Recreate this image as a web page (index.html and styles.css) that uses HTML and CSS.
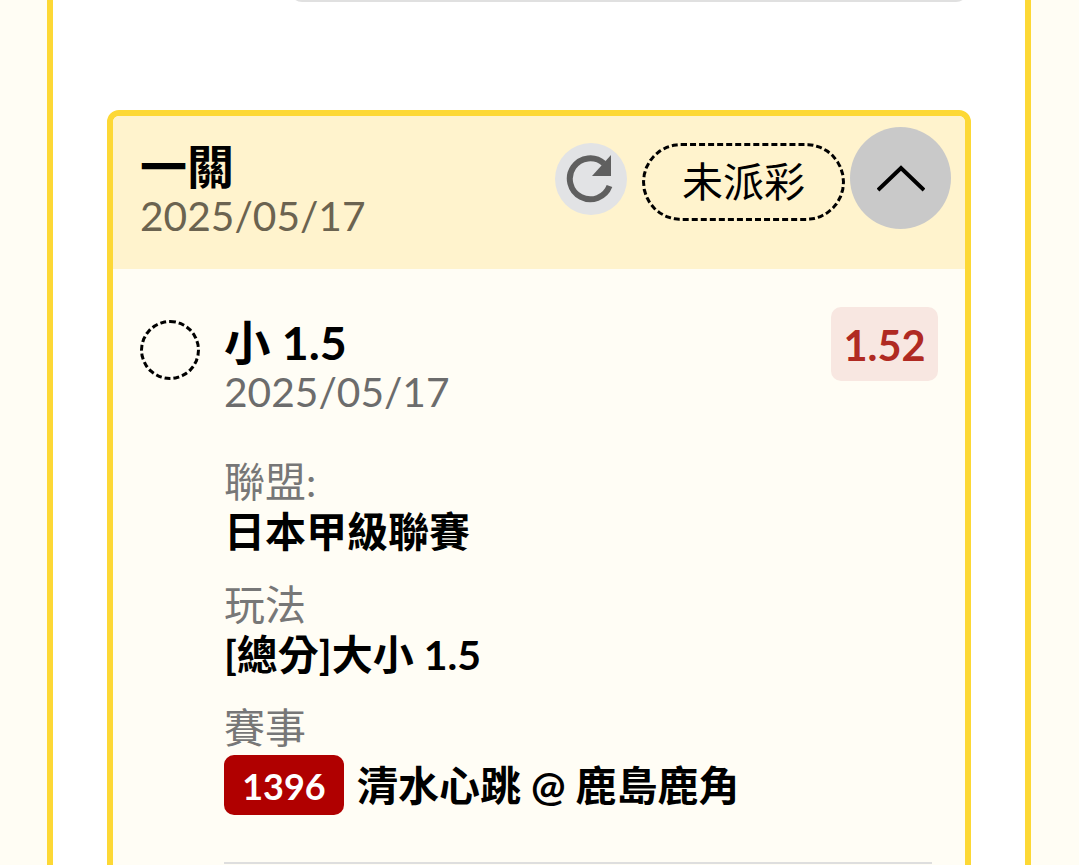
FILE: index.html
```html
<!DOCTYPE html>
<html lang="zh-Hant">
<head>
    <meta charset="UTF-8">
    <meta name="viewport" content="width=device-width, initial-scale=1.0">
    <title>一關</title>
    <link rel="stylesheet" href="styles.css">
</head>
<body>

<div class="panel">
    <div class="top-field"></div>

    <div class="bet-card">
        <!-- header -->
        <div class="bet-head">
            <div class="bet-head-text">
                <div class="bet-type">一關</div>
                <div class="bet-date">2025/05/17</div>
            </div>
            <div class="bet-head-actions">
                <div class="refresh-btn">
                    <svg width="50" height="50" viewBox="0 0 50 50">
                        <path class="refresh-arc" d="M43.5 32A20.5 20.5 0 1 1 38 9.5"/>
                        <path class="refresh-tip" d="M45 1V22H26Z"/>
                    </svg>
                </div>
                <div class="status-pill">未派彩</div>
                <div class="toggle-btn">
                    <svg width="48" height="30" viewBox="0 0 48 30">
                        <path class="toggle-chevron" d="M1 27L24 5L47 27"/>
                    </svg>
                </div>
            </div>
        </div>

        <!-- selection -->
        <div class="bet-body">
            <div class="pick-row">
                <div class="pick-circle"></div>
                <div class="pick-main">
                    <div class="pick-name">小 1.5</div>
                    <div class="pick-date">2025/05/17</div>
                </div>
                <div class="pick-odds">1.52</div>
            </div>

            <div class="info-block">
                <div class="info-label">聯盟:</div>
                <div class="info-value">日本甲級聯賽</div>
            </div>
            <div class="info-block">
                <div class="info-label">玩法</div>
                <div class="info-value">[總分]大小 1.5</div>
            </div>
            <div class="info-block">
                <div class="info-label">賽事</div>
                <div class="info-value match-line">
                    <span class="match-no">1396</span>
                    <span>清水心跳 @ 鹿島鹿角</span>
                </div>
            </div>
            <div class="divider"></div>
        </div>
    </div>
</div>

</body>
</html>
```

FILE: styles.css
```css
html, body {
    height: 100%;
    overflow: hidden;
}
body {
    margin: 0;
    background-color: #fffdf4;
    font-family: Lato, "Noto Sans CJK TC", sans-serif;
    color: #000;
}
.panel {
    box-sizing: border-box;
    width: 984px;
    height: 865px;
    margin-left: 47px;
    padding: 0 54px;
    background-color: #fff;
    border-left: 6px solid #fdd835;
    border-right: 6px solid #fdd835;
    overflow: hidden;
}
.top-field {
    box-sizing: border-box;
    height: 14px;
    margin: -12px 3px 108px 183px;
    border-bottom: 3px solid #e0e0e0;
    border-radius: 0 0 12px 12px;
}
.bet-card {
    width: 864px;
    box-sizing: border-box;
    border: 6px solid #fdd835;
    border-radius: 12px;
    background-color: #fffdf5;
}
.bet-head {
    display: flex;
    justify-content: space-between;
    height: 153px;
    padding-left: 27px;
    padding-right: 14px;
    background-color: #fff3cd;
    border-radius: 6px 6px 0 0;
}
.bet-type {
    margin-top: 23px;
    font-size: 47px;
    line-height: 54px;
    font-weight: 700;
}
.bet-date {
    font-size: 40.7px;
    line-height: 46px;
    color: #6b6350;
}
.bet-head-actions {
    display: flex;
    align-items: flex-start;
}
.refresh-btn {
    display: flex;
    align-items: center;
    justify-content: center;
    width: 72px;
    height: 72px;
    margin-top: 27px;
    margin-right: 15px;
    border-radius: 50%;
    background-color: #e2e3e5;
}
.refresh-arc {
    fill: none;
    stroke: #5f5f5f;
    stroke-width: 6;
}
.refresh-tip {
    fill: #5f5f5f;
}
.status-pill {
    box-sizing: border-box;
    width: 203px;
    height: 78px;
    margin-top: 27px;
    border: 3px dashed #000;
    border-radius: 39px;
    font-size: 41px;
    line-height: 72px;
    text-align: center;
}
.toggle-btn {
    display: flex;
    align-items: center;
    justify-content: center;
    width: 101px;
    height: 102px;
    margin-top: 11px;
    margin-left: 5px;
    border-radius: 50%;
    background-color: #c9c9c9;
}
.toggle-chevron {
    fill: none;
    stroke: #000;
    stroke-width: 4;
}
.bet-body {
    padding: 38px 27px 120px 27px;
}
.pick-row {
    display: flex;
    align-items: flex-start;
}
.pick-circle {
    box-sizing: border-box;
    width: 60px;
    height: 60px;
    margin-top: 13px;
    margin-right: 24px;
    border: 3px dashed #000;
    border-radius: 50%;
}
.pick-main {
    flex: 1;
}
.pick-name {
    font-size: 46.5px;
    line-height: 54px;
    font-weight: 700;
    margin-top: 8px;
}
.pick-date {
    font-size: 40.7px;
    line-height: 46px;
    color: #6c6c6c;
}
.pick-odds {
    width: 107px;
    height: 74px;
    border-radius: 10px;
    background-color: #f8e7e1;
    color: #b02a22;
    font-size: 41.5px;
    font-weight: 700;
    line-height: 76px;
    text-align: center;
}
.info-block {
    margin-left: 84px;
    margin-bottom: 24px;
}
.pick-row + .info-block {
    margin-top: 42px;
}
.info-label {
    font-size: 41px;
    line-height: 50px;
    color: #777;
}
.info-value {
    font-size: 41px;
    line-height: 49px;
    font-weight: 700;
}
.match-line {
    display: flex;
    align-items: center;
    gap: 13px;
    margin-top: 2px;
}
.match-no {
    width: 120px;
    height: 60px;
    border-radius: 10px;
    background-color: #b00000;
    color: #fff;
    font-size: 36px;
    line-height: 62px;
    text-align: center;
}
.divider {
    margin-left: 84px;
    margin-right: 6px;
    margin-top: 47px;
    border-top: 2px solid #dedede;
}
```
